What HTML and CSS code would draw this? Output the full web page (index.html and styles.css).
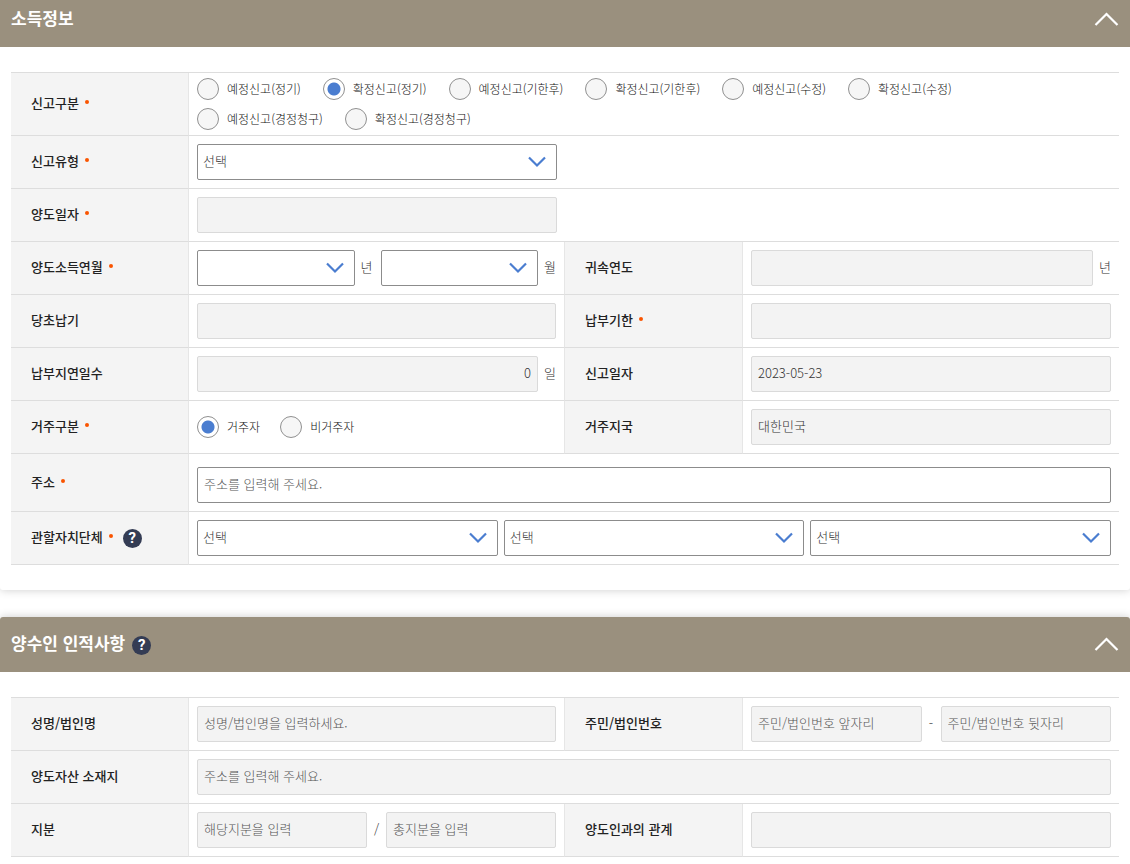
FILE: index.html
```html
<!DOCTYPE html>
<html lang="ko">
<head>
<meta charset="utf-8">
<meta name="viewport" content="width=device-width, initial-scale=1">
<title>소득정보</title>
<link rel="stylesheet" href="styles.css">
</head>
<body>
<main class="page">
  <section class="panel panel--top">
    <header class="panel-head">
      <h2 class="panel-title">소득정보</h2>
      <button class="fold" type="button" aria-label="접기">
        <svg width="26" height="16" viewBox="0 0 26 16" fill="none" stroke="#fff" stroke-width="2.2"><path d="M1.500 13 12.500 2l11 11"/></svg>
      </button>
    </header>
    <div class="panel-body">
      <table class="form-table">
        <colgroup><col class="col-label"><col><col class="col-label"><col></colgroup>
        <tbody>
          <tr>
            <th scope="row"><span class="label required">신고구분</span></th>
            <td colspan="3" class="cell-radios">
              <div class="radios radios--wide">
                <label class="radio"><input type="radio" name="report">예정신고(정기)</label>
                <label class="radio"><input type="radio" name="report" checked>확정신고(정기)</label>
                <label class="radio"><input type="radio" name="report">예정신고(기한후)</label>
                <label class="radio"><input type="radio" name="report">확정신고(기한후)</label>
                <label class="radio"><input type="radio" name="report">예정신고(수정)</label>
                <label class="radio"><input type="radio" name="report">확정신고(수정)</label>
              </div>
              <div class="radios radios--wide">
                <label class="radio"><input type="radio" name="report">예정신고(경정청구)</label>
                <label class="radio"><input type="radio" name="report">확정신고(경정청구)</label>
              </div>
            </td>
          </tr>
          <tr>
            <th scope="row"><label class="label required" for="type">신고유형</label></th>
            <td colspan="3"><div class="line"><select class="field field--fixed" id="type"><option>선택</option></select></div></td>
          </tr>
          <tr>
            <th scope="row"><label class="label required" for="transfer-date">양도일자</label></th>
            <td colspan="3"><div class="line"><input class="field field--fixed" id="transfer-date" type="text" readonly></div></td>
          </tr>
          <tr>
            <th scope="row"><span class="label required">양도소득연월</span></th>
            <td class="split">
              <div class="line line--pair">
                <div class="line"><select class="field" id="year" aria-label="연도"><option></option></select><label class="unit" for="year">년</label></div>
                <div class="line"><select class="field" id="month" aria-label="월"><option></option></select><label class="unit" for="month">월</label></div>
              </div>
            </td>
            <th scope="row"><label class="label" for="attr-year">귀속연도</label></th>
            <td><div class="line"><input class="field" id="attr-year" type="text" readonly><span class="unit">년</span></div></td>
          </tr>
          <tr>
            <th scope="row"><label class="label" for="first-due">당초납기</label></th>
            <td class="split"><div class="line"><input class="field" id="first-due" type="text" readonly></div></td>
            <th scope="row"><label class="label required" for="due">납부기한</label></th>
            <td><div class="line"><input class="field" id="due" type="text" readonly></div></td>
          </tr>
          <tr>
            <th scope="row"><label class="label" for="delay">납부지연일수</label></th>
            <td class="split"><div class="line"><input class="field field--number" id="delay" type="text" value="0" readonly><span class="unit">일</span></div></td>
            <th scope="row"><label class="label" for="report-date">신고일자</label></th>
            <td><div class="line"><input class="field" id="report-date" type="text" value="2023-05-23" readonly></div></td>
          </tr>
          <tr>
            <th scope="row"><span class="label required">거주구분</span></th>
            <td class="split">
              <div class="radios">
                <label class="radio"><input type="radio" name="resident" checked>거주자</label>
                <label class="radio"><input type="radio" name="resident">비거주자</label>
              </div>
            </td>
            <th scope="row"><label class="label" for="country">거주지국</label></th>
            <td><div class="line"><input class="field" id="country" type="text" value="대한민국" readonly></div></td>
          </tr>
          <tr>
            <th scope="row"><label class="label required" for="address">주소</label></th>
            <td colspan="3" class="cell-address"><div class="line"><input class="field" id="address" type="text" placeholder="주소를 입력해 주세요."></div></td>
          </tr>
          <tr>
            <th scope="row"><div class="label-line"><span class="label required">관할자치단체</span><button class="help" type="button" aria-label="도움말">?</button></div></th>
            <td colspan="3">
              <div class="line">
                <select class="field" aria-label="시도"><option>선택</option></select>
                <select class="field" aria-label="시군구"><option>선택</option></select>
                <select class="field" aria-label="읍면동"><option>선택</option></select>
              </div>
            </td>
          </tr>
        </tbody>
      </table>
    </div>
  </section>

  <section class="panel panel--last">
    <header class="panel-head">
      <h2 class="panel-title">양수인 인적사항</h2>
      <button class="help" type="button" aria-label="도움말">?</button>
      <button class="fold" type="button" aria-label="접기">
        <svg width="26" height="16" viewBox="0 0 26 16" fill="none" stroke="#fff" stroke-width="2.2"><path d="M1.500 13 12.500 2l11 11"/></svg>
      </button>
    </header>
    <div class="panel-body">
      <table class="form-table">
        <colgroup><col class="col-label"><col><col class="col-label"><col></colgroup>
        <tbody>
          <tr>
            <th scope="row"><label class="label" for="name">성명/법인명</label></th>
            <td class="split"><div class="line"><input class="field" id="name" type="text" placeholder="성명/법인명을 입력하세요." readonly></div></td>
            <th scope="row"><label class="label" for="id-front">주민/법인번호</label></th>
            <td>
              <div class="line line--joined">
                <input class="field" id="id-front" type="text" placeholder="주민/법인번호 앞자리" readonly>
                <span class="joint">-</span>
                <input class="field" type="text" aria-label="주민/법인번호 뒷자리" placeholder="주민/법인번호 뒷자리" readonly>
              </div>
            </td>
          </tr>
          <tr>
            <th scope="row"><label class="label" for="asset">양도자산 소재지</label></th>
            <td colspan="3"><div class="line"><input class="field" id="asset" type="text" placeholder="주소를 입력해 주세요." readonly></div></td>
          </tr>
          <tr>
            <th scope="row"><label class="label" for="share">지분</label></th>
            <td class="split">
              <div class="line line--joined">
                <input class="field" id="share" type="text" placeholder="해당지분을 입력" readonly>
                <span class="joint">/</span>
                <input class="field" type="text" aria-label="총지분" placeholder="총지분을 입력" readonly>
              </div>
            </td>
            <th scope="row"><label class="label" for="relation">양도인과의 관계</label></th>
            <td><div class="line"><input class="field" id="relation" type="text" readonly></div></td>
          </tr>
        </tbody>
      </table>
    </div>
  </section>
</main>
</body>
</html>
```
FILE: styles.css
```css
* {
  box-sizing: border-box;
}

body {
  margin: 0;
  background: #fff;
  color: #222;
  font-family: "Noto Sans CJK KR", "Noto Sans", sans-serif;
  font-size: 13px;
  line-height: 20px;
}

button {
  padding: 0;
  border: 0;
  cursor: pointer;
}

.panel {
  margin-bottom: 27px;
  border-radius: 3px;
  background: #fff;
  box-shadow: 0 0 10px rgba(0, 0, 0, 0.2);
}

.panel--top {
  border-top-left-radius: 0;
  border-top-right-radius: 0;
}

.panel--last {
  margin-bottom: 0;
  border-radius: 3px 3px 0 0;
}

.panel-head {
  display: flex;
  align-items: center;
  gap: 7px;
  min-height: 55px;
  padding: 0 10px 0 11px;
  border-radius: 3px 3px 0 0;
  background: #9a907e;
}

.panel--top .panel-head {
  min-height: 47px;
  padding-bottom: 8px;
  border-radius: 0;
}

.panel-title {
  margin: 0;
  padding-bottom: 4px;
  color: #fff;
  font-size: 17px;
  font-weight: 700;
  line-height: 24px;
}

.fold {
  display: flex;
  margin-left: auto;
  background: transparent;
}

.help {
  flex: none;
  width: 19px;
  height: 19px;
  margin-top: 2px;
  border-radius: 50%;
  background: #343c54;
  color: #fff;
  font-family: Roboto, sans-serif;
  font-size: 15px;
  font-weight: 700;
  line-height: 19px;
}

.panel-body {
  padding: 25px 11px;
}

.panel--last .panel-body {
  padding-bottom: 7px;
}

.form-table {
  width: 100%;
  border-top: 1px solid #ddd;
  border-spacing: 0;
  table-layout: fixed;
}

.col-label {
  width: 178px;
}

th,
td {
  padding: 8px;
  border-bottom: 1px solid #ddd;
}

th {
  padding: 0 8px 2px 20px;
  border-right: 1px solid #e6e6e6;
  background: #f4f4f4;
  font-weight: 500;
  text-align: left;
}

.split {
  border-right: 1px solid #e6e6e6;
}

.cell-radios {
  padding: 5px 8px;
}

.cell-address {
  padding-top: 13px;
}

.label-line {
  display: flex;
  align-items: center;
  gap: 10px;
}

.required::after {
  content: "";
  display: inline-block;
  width: 4px;
  height: 4px;
  margin-left: 6px;
  border-radius: 50%;
  background: #f95400;
  vertical-align: 4px;
}

.line {
  display: flex;
  flex: 1;
  align-items: center;
  gap: 6px;
  min-width: 0;
}

.line--pair {
  gap: 8px;
}

.line--joined {
  gap: 0;
}

.unit,
.joint {
  flex: none;
  padding-bottom: 2px;
  color: #333;
  font-weight: 300;
}

.joint {
  width: 19px;
  text-align: center;
}

.field {
  flex: 1;
  min-width: 0;
  width: 100%;
  height: 36px;
  margin: 0;
  padding: 0 6px 3px;
  border: 1px solid #8c8c8c;
  border-radius: 2px;
  outline: 0;
  background: #fff;
  color: #333;
  font: inherit;
  font-weight: 300;
}

.field--fixed {
  flex: 0 1 360px;
}

.field--number {
  text-align: right;
}

.field::placeholder {
  color: #555;
  opacity: 1;
}

.field:read-only:not(select) {
  border-color: #dadada;
  background: #f3f3f3;
}

select.field {
  padding: 0 36px 2px 5px;
  appearance: none;
  background: #fff url("data:image/svg+xml,%3Csvg xmlns='http://www.w3.org/2000/svg' width='18' height='12' fill='none' stroke='%234a7dd0' stroke-width='2.2'%3E%3Cpath d='M1 1.5l8 8 8-8'/%3E%3C/svg%3E") no-repeat right 10px center;
}

.radios {
  display: flex;
  flex-wrap: wrap;
  gap: 8px 20px;
}

.radios--wide {
  column-gap: 22px;
}

.radios + .radios {
  margin-top: 8px;
}

.radio {
  display: flex;
  align-items: center;
  gap: 8px;
  color: #111;
  font-size: 12px;
  font-weight: 300;
  line-height: 20px;
}

.radio input {
  width: 22px;
  height: 22px;
  margin: 0;
  border: 1px solid #909090;
  border-radius: 50%;
  appearance: none;
  background: #f6f6f6;
}

.radio input:checked {
  background: radial-gradient(circle, #4a7dd0 6px, #fff 7px);
}
```
